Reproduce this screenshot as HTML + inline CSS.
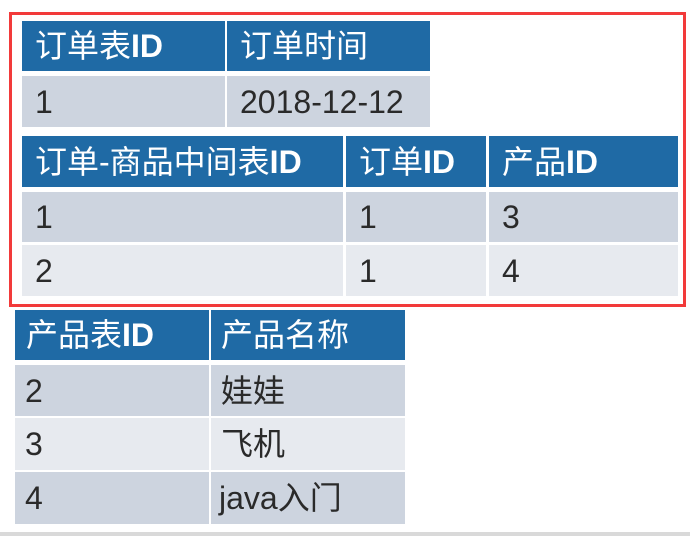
<!DOCTYPE html>
<html><head><meta charset="utf-8"><style>
body{margin:0;width:690px;height:536px;background:#fff;position:relative;overflow:hidden;font-family:"Liberation Sans","Noto Sans CJK SC",sans-serif}
.c{position:absolute;box-sizing:border-box;padding-left:13px;display:flex;align-items:center;font-size:32px;line-height:1;color:#2a2a2a;white-space:nowrap}
.c span{display:block;line-height:1}
.h{background:#1f6aa5;color:#fff}
.h b{font-weight:bold}
.o{background:#cdd4df}
.e{background:#e7eaef}
#red{position:absolute;left:9px;top:12px;width:677px;height:295px;box-sizing:border-box;border:3px solid #f23a3a}
#bar{position:absolute;left:0;top:532px;width:690px;height:4px;background:#d9d9d9}
</style></head><body>
<div id="red"></div>
<div class="c h" style="left:22px;top:21px;width:203px;height:50px"><span>订单表<b>ID</b></span></div>
<div class="c h" style="left:227px;top:21px;width:203px;height:50px"><span>订单时间</span></div>
<div class="c o" style="left:22px;top:76px;width:203px;height:51px"><span>1</span></div>
<div class="c o" style="left:227px;top:76px;width:203px;height:51px"><span>2018-12-12</span></div>

<div class="c h" style="left:22px;top:136px;width:321px;height:51px"><span>订单-商品中间表<b>ID</b></span></div>
<div class="c h" style="left:346px;top:136px;width:140px;height:51px"><span>订单<b>ID</b></span></div>
<div class="c h" style="left:489px;top:136px;width:189px;height:51px"><span>产品<b>ID</b></span></div>
<div class="c o" style="left:22px;top:192px;width:321px;height:50px"><span>1</span></div>
<div class="c o" style="left:346px;top:192px;width:140px;height:50px"><span>1</span></div>
<div class="c o" style="left:489px;top:192px;width:189px;height:50px"><span>3</span></div>
<div class="c e" style="left:22px;top:245px;width:321px;height:51px"><span>2</span></div>
<div class="c e" style="left:346px;top:245px;width:140px;height:51px"><span>1</span></div>
<div class="c e" style="left:489px;top:245px;width:189px;height:51px"><span>4</span></div>

<div class="c h" style="left:15px;top:310px;width:194px;height:50px;padding-left:11px"><span>产品表<b>ID</b></span></div>
<div class="c h" style="left:211px;top:310px;width:194px;height:50px;padding-left:10px"><span>产品名称</span></div>
<div class="c o" style="left:15px;top:365px;width:194px;height:51px;padding-left:10px"><span>2</span></div>
<div class="c o" style="left:211px;top:365px;width:194px;height:51px;padding-left:10px"><span>娃娃</span></div>
<div class="c e" style="left:15px;top:418px;width:194px;height:52px;padding-left:10px"><span>3</span></div>
<div class="c e" style="left:211px;top:418px;width:194px;height:52px;padding-left:10px"><span>飞机</span></div>
<div class="c o" style="left:15px;top:472px;width:194px;height:52px;padding-left:10px"><span>4</span></div>
<div class="c o" style="left:211px;top:472px;width:194px;height:52px;padding-left:8px"><span>java入门</span></div>
<div id="bar"></div>
</body></html>
